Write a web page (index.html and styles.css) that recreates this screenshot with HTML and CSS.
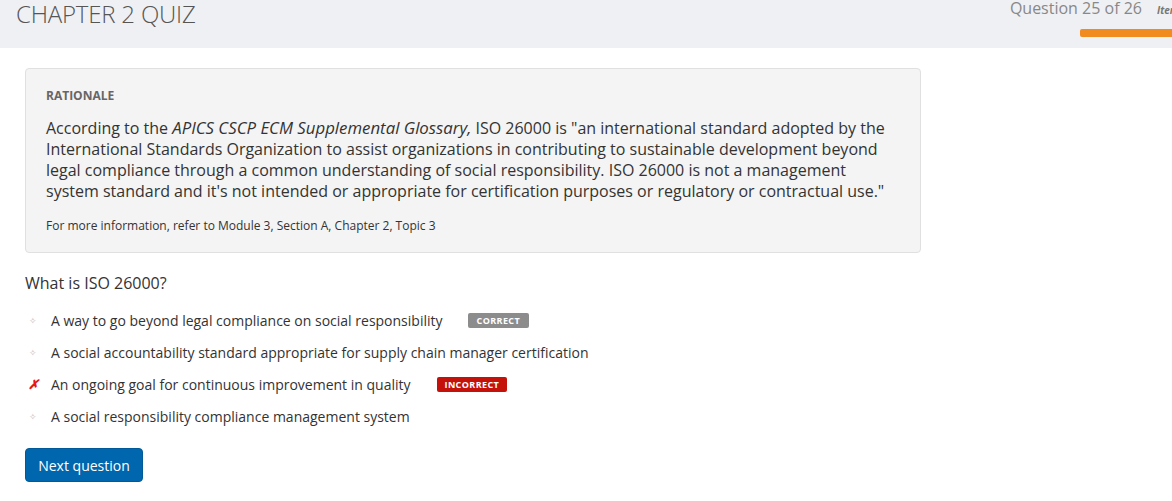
FILE: index.html
```html
<!DOCTYPE html>
<html>
<head>
<meta charset="utf-8">
<link rel="stylesheet" href="styles.css">
</head>
<body>
<header class="topbar">
  <h1 class="title">CHAPTER 2 QUIZ</h1>
  <div class="progress">
    <div class="progress-row">
      <span class="qcount">Question 25 of 26</span>
      <span class="item-label">Item</span>
    </div>
    <div class="progress-bar"></div>
  </div>
</header>
<main class="content">
  <section class="rationale">
    <h2 class="rationale-title">RATIONALE</h2>
    <p class="rationale-text">According to the <em class="source">APICS CSCP ECM Supplemental Glossary,</em> ISO 26000 is "an international standard adopted by the International Standards Organization to assist organizations in contributing to sustainable development beyond legal compliance through a common understanding of social responsibility. ISO 26000 is not a management system standard and it's not intended or appropriate for certification purposes or regulatory or contractual use."</p>
    <p class="rationale-ref">For more information, refer to Module 3, Section A, Chapter 2, Topic 3</p>
  </section>
  <p class="question">What is ISO 26000?</p>
  <ul class="options">
    <li class="option"><span class="marker dot">&#10023;</span><span class="opt-text">A way to go beyond legal compliance on social responsibility</span><span class="badge badge-correct">CORRECT</span></li>
    <li class="option"><span class="marker dot">&#10023;</span><span class="opt-text">A social accountability standard appropriate for supply chain manager certification</span></li>
    <li class="option"><span class="marker cross">&#10007;</span><span class="opt-text">An ongoing goal for continuous improvement in quality</span><span class="badge badge-incorrect">INCORRECT</span></li>
    <li class="option"><span class="marker dot">&#10023;</span><span class="opt-text">A social responsibility compliance management system</span></li>
  </ul>
  <button class="next-btn">Next question</button>
</main>
</body>
</html>
```
FILE: styles.css
```css
* { box-sizing: border-box; }
html, body { margin: 0; padding: 0; }
body {
  font-family: "Open Sans", "Liberation Sans", sans-serif;
  color: #333;
  background: #fff;
  overflow: hidden;
  width: 1172px;
  height: 501px;
}
.topbar {
  height: 48px;
  background: #eff0f4;
  display: flex;
  justify-content: space-between;
  align-items: flex-start;
  padding-left: 16px;
  overflow: hidden;
}
.title {
  margin: 0;
  font-size: 24px;
  font-weight: 300;
  color: #555;
  line-height: 27px;
  letter-spacing: -0.2px;
}
.progress {
  display: flex;
  flex-direction: column;
  align-items: flex-end;
}
.progress-row {
  display: flex;
  align-items: baseline;
  gap: 15px;
  line-height: 16px;
}
.qcount {
  font-size: 16px;
  color: #888;
  font-weight: 400;
}
.item-label {
  display: inline-block;
  width: 15px;
  overflow: hidden;
  white-space: nowrap;
  font-size: 10px;
  font-style: italic;
  font-weight: 700;
  color: #777;
}
.progress-bar {
  margin-top: 11px;
  width: 92px;
  height: 8px;
  background: #f18b1f;
  border-radius: 2px 0 0 2px;
}
.content {
  padding: 20px 25px 0 25px;
}
.rationale {
  width: 896px;
  background: #f4f4f4;
  border: 1px solid #e0e0e0;
  border-radius: 4px;
  padding: 18px 20px 18px 20px;
}
.rationale-title {
  margin: 0 0 14px 0;
  font-size: 12px;
  font-weight: 700;
  color: #666;
  line-height: 17px;
}
.rationale-text {
  margin: 0 0 15px 0;
  font-size: 16px;
  line-height: 21px;
  color: #333;
}
.source {
  font-size: 16.8px;
  line-height: 1;
}
.rationale-ref {
  margin: 0;
  font-size: 12px;
  line-height: 17px;
  color: #333;
}
.question {
  margin: 20px 0 16px 0;
  font-size: 16px;
  line-height: 21px;
  color: #333;
}
.options {
  list-style: none;
  margin: 0;
  padding: 0;
  display: flex;
  flex-direction: column;
  gap: 12px;
}
.option {
  display: flex;
  align-items: center;
  height: 20px;
  font-size: 14px;
  color: #333;
}
.marker {
  width: 26px;
  flex: none;
  padding-left: 3px;
}
.dot {
  font-size: 9px;
  color: #bbb;
  padding-left: 4px;
}
.cross {
  color: #e8141a;
  font-size: 13px;
  font-weight: 700;
  font-style: italic;
}
.badge {
  margin-left: 25px;
  font-size: 9px;
  font-weight: 700;
  letter-spacing: 0.4px;
  color: #fff;
  padding: 2px 9px 1px 9px;
  border-radius: 2px;
  line-height: 12px;
}
.badge-correct { background: #8c8c8c; }
.badge-incorrect { background: #c4120a; margin-left: 26px; padding: 2px 8px 1px 8px; }
.next-btn {
  margin-top: 22px;
  font-family: "Open Sans", "Liberation Sans", sans-serif;
  font-size: 14px;
  color: #fff;
  background: #0066ad;
  border: 1px solid #005a99;
  border-radius: 4px;
  padding: 0 12px;
  height: 34px;
  width: 118px;
  cursor: pointer;
}
```
